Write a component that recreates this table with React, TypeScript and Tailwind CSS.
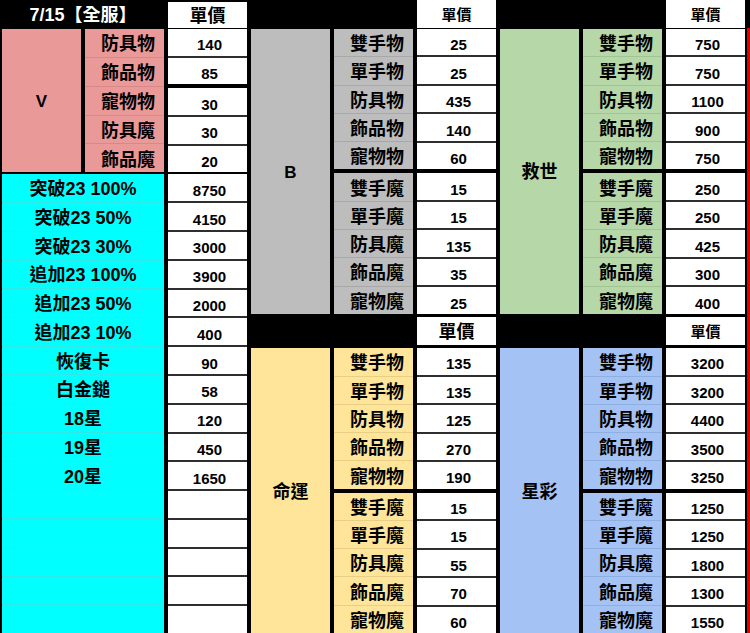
import clsx from "clsx";

type Block = {
  label: string;
  labelSize: string;
  bg: string;
  line: string;
  names: string[];
  values: string[];
  nameBreak: number;
  valueBreak: number;
  grow: string;
  top: string;
};

const mats = ["雙手物", "單手物", "防具物", "飾品物", "寵物物", "雙手魔", "單手魔", "防具魔", "飾品魔", "寵物魔"];

const vBlock: Block = {
  label: "V",
  labelSize: "text-[17px]",
  bg: "bg-[#ea9999]",
  line: "border-[#d88888]",
  names: ["防具物", "飾品物", "寵物物", "防具魔", "飾品魔"],
  values: ["140", "85", "30", "30", "20"],
  nameBreak: -1,
  valueBreak: 1,
  grow: "flex-[5]",
  top: "mt-[1px]",
};

const middle: Block[] = [
  {
    label: "B",
    labelSize: "text-[17px]",
    bg: "bg-[#bdbdbd]",
    line: "border-[#a8a8a8]",
    names: mats,
    values: ["25", "25", "435", "140", "60", "15", "15", "135", "35", "25"],
    nameBreak: 4,
    valueBreak: 4,
    grow: "flex-[10]",
    top: "mt-[1px]",
  },
  {
    label: "命運",
    labelSize: "text-[18px]",
    bg: "bg-[#ffe599]",
    line: "border-[#e9cf85]",
    names: mats,
    values: ["135", "135", "125", "270", "190", "15", "15", "55", "70", "60"],
    nameBreak: 4,
    valueBreak: 4,
    grow: "flex-[10]",
    top: "mt-[3px]",
  },
];

const right: Block[] = [
  {
    label: "救世",
    labelSize: "text-[18px]",
    bg: "bg-[#b6d7a8]",
    line: "border-[#a2c494]",
    names: mats,
    values: ["750", "750", "1100", "900", "750", "250", "250", "425", "300", "400"],
    nameBreak: 4,
    valueBreak: 4,
    grow: "flex-[10]",
    top: "mt-[1px]",
  },
  {
    label: "星彩",
    labelSize: "text-[18px]",
    bg: "bg-[#a4c2f4]",
    line: "border-[#8fafe3]",
    names: mats,
    values: ["3200", "3200", "4400", "3500", "3250", "1250", "1250", "1800", "1300", "1550"],
    nameBreak: 4,
    valueBreak: 4,
    grow: "flex-[10]",
    top: "mt-[3px]",
  },
];

const cyanLabels = [
  "突破23 100%",
  "突破23 50%",
  "突破23 30%",
  "追加23 100%",
  "追加23 50%",
  "追加23 10%",
  "恢復卡",
  "白金鎚",
  "18星",
  "19星",
  "20星",
  "",
  "",
  "",
  "",
  "",
];
const cyanValues = ["8750", "4150", "3000", "3900", "2000", "400", "90", "58", "120", "450", "1650", "", "", "", "", ""];

function ValueColumn({ values, breakAt }: { values: string[]; breakAt: number }) {
  return (
    <div className="flex w-[79px] flex-col">
      {values.map((v, i) => (
        <div
          key={i}
          className={clsx(
            "flex flex-1 items-center justify-center bg-white pl-[4px] pt-[5px] text-[15px] font-bold leading-none text-black",
            i === breakAt ? "border-b-[4px] border-black" : i < values.length - 1 && "border-b-2 border-[#2e2e2e]"
          )}
        >
          {v}
        </div>
      ))}
    </div>
  );
}

function GroupBlock({ b }: { b: Block }) {
  return (
    <div className={clsx("flex min-h-0 gap-x-[4px]", b.grow, b.top)}>
      <div className={clsx("flex w-[79px] items-center justify-center pt-[3px] font-bold text-black", b.bg, b.labelSize)}>
        {b.label}
      </div>
      <div className={clsx("flex w-[79px] flex-col", b.bg)}>
        {b.names.map((n, i) => (
          <div
            key={i}
            className={clsx(
              "flex flex-1 items-center justify-end pr-[9px] pt-[3px] text-[18px] font-bold leading-none text-black",
              b.bg,
              i === b.nameBreak ? "border-b-[4px] border-black" : i < b.names.length - 1 && clsx("border-b", b.line)
            )}
          >
            {n}
          </div>
        ))}
      </div>
      <ValueColumn values={b.values} breakAt={b.valueBreak} />
    </div>
  );
}

function PriceHead({ big, top }: { big: boolean; top: string }) {
  return (
    <div className="flex h-full gap-x-[4px]">
      <div className="w-[79px]" />
      <div className="w-[79px]" />
      <div
        className={clsx(
          "flex w-[79px] items-center justify-center bg-white pt-[1px] font-bold leading-none text-black",
          big ? "text-[18px]" : "text-[15px]",
          top
        )}
      >
        單價
      </div>
    </div>
  );
}

export default function App() {
  return (
    <div className="flex h-[633px] w-[750px] overflow-hidden bg-black font-['Liberation_Sans','Noto_Sans_CJK_TC',sans-serif]">
      <div className="flex h-full gap-x-[4px] pl-[2px]">
        {/* left panel */}
        <div className="flex h-full w-[245px] flex-col">
          <div className="flex h-[28px] shrink-0 gap-x-[4px]">
            <div className="flex w-[162px] items-center justify-center pt-[1px] text-[18px] font-bold leading-none text-white">
              7/15【全服】
            </div>
            <div className="mt-[2px] flex w-[79px] items-center justify-center bg-white pt-[1px] text-[18px] font-bold leading-none text-black">
              單價
            </div>
          </div>
          <GroupBlock b={vBlock} />
          <div className="mt-[2px] flex min-h-0 flex-[16] gap-x-[4px]">
            <div className="flex w-[162px] flex-col bg-[#00ffff]">
              {cyanLabels.map((t, i) => (
                <div
                  key={i}
                  className={clsx(
                    "flex flex-1 items-center justify-center pt-[2px] text-[18px] font-bold leading-none text-black",
                    i < cyanLabels.length - 1 && "border-b border-[#2ee8e8]"
                  )}
                >
                  {t}
                </div>
              ))}
            </div>
            <ValueColumn values={cyanValues} breakAt={-1} />
          </div>
        </div>

        {/* middle panel */}
        <div className="flex h-full w-[245px] flex-col">
          <div className="h-[28px] shrink-0">
            <PriceHead big={false} top="" />
          </div>
          <GroupBlock b={middle[0]} />
          <div className="mt-[3px] min-h-0 flex-[1]">
            <PriceHead big={true} top="" />
          </div>
          <GroupBlock b={middle[1]} />
        </div>

        {/* right panel */}
        <div className="flex h-full w-[245px] flex-col">
          <div className="h-[28px] shrink-0">
            <PriceHead big={false} top="" />
          </div>
          <GroupBlock b={right[0]} />
          <div className="mt-[3px] min-h-0 flex-[1]">
            <PriceHead big={false} top="" />
          </div>
          <GroupBlock b={right[1]} />
        </div>
      </div>
      <div className="ml-[2px] mt-[28px] w-[3px] bg-[#e00000]" />
    </div>
  );
}
